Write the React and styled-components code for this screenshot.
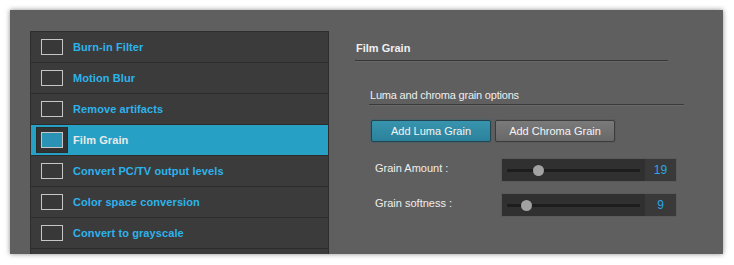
import React from "react";
import styled, { createGlobalStyle } from "styled-components";

const Global = createGlobalStyle`
  html, body { margin: 0; padding: 0; background: #ffffff; }
  body { font-family: "Liberation Sans", Arial, sans-serif; }
`;

const Window = styled.div`
  margin: 10px;
  width: 713px;
  height: 244px;
  box-sizing: border-box;
  background: #5f5f5f;
  box-shadow: 0 0 5px rgba(0, 0, 0, 0.45);
  display: flex;
  padding: 21px 0 0 20px;
  overflow: hidden;
`;

const List = styled.div`
  width: 299px;
  flex: none;
  box-sizing: border-box;
  background: #3b3b3b;
  border: 1px solid #2e2e2e;
  border-bottom: none;
  display: flex;
  flex-direction: column;
`;

const Row = styled.div`
  height: 30px;
  flex: none;
  border-bottom: 1px solid #2c2c2c;
  display: flex;
  align-items: center;
  padding-left: 10px;
  background: ${(p) => (p.$selected ? "#27a0c6" : "transparent")};
`;

const Check = styled.div`
  width: 20px;
  height: 14px;
  border: 1px solid #c6c6c6;
  background: ${(p) => (p.$selected ? "#2a93b5" : "#383838")};
  box-shadow: ${(p) => (p.$selected ? "0 0 0 4px #323232, 0 0 0 5px #2c2c2c" : "none")};
  flex: none;
`;

const RowLabel = styled.span`
  margin-left: 10px;
  font-size: 11px;
  font-weight: bold;
  color: ${(p) => (p.$selected ? "#eaeaea" : "#2db3ec")};
  letter-spacing: 0.1px;
`;

const Right = styled.div`
  margin-left: 26px;
  padding-top: 10px;
  display: flex;
  flex-direction: column;
`;

const Heading = styled.div`
  width: 312px;
  padding-left: 1px;
  font-size: 11px;
  font-weight: bold;
  color: #f0f0f0;
  line-height: 14px;
  padding-bottom: 5px;
  border-bottom: 1px solid #363636;
  box-shadow: 0 1px 0 #686868;
`;

const SubHeading = styled.div`
  margin: 27px 0 0 14px;
  width: 314px;
  padding-left: 1px;
  font-size: 11px;
  letter-spacing: -0.2px;
  color: #eeeeee;
  line-height: 14px;
  padding-bottom: 2px;
  border-bottom: 1px solid #3a3a3a;
  box-shadow: 0 1px 0 #686868;
`;

const Buttons = styled.div`
  margin: 15px 0 0 16px;
  display: flex;
  gap: 4px;
`;

const Button = styled.button`
  width: 120px;
  height: 22px;
  box-sizing: border-box;
  border-radius: 2px;
  border: 1px solid ${(p) => (p.$primary ? "#23434e" : "#3c3c3c")};
  background: ${(p) =>
    p.$primary
      ? "linear-gradient(#3894ae, #2b819b)"
      : "linear-gradient(#7a7a7a, #686868)"};
  color: #f4f4f4;
  font-family: "Liberation Sans", Arial, sans-serif;
  font-size: 11px;
  padding: 0;
  box-shadow: 0 0 0 1px ${(p) => (p.$primary ? "#4f5f64" : "#5a5a5a")};
`;

const Params = styled.div`
  margin: 17px 0 0 20px;
  display: flex;
  flex-direction: column;
  gap: 13px;
`;

const Param = styled.div`
  display: flex;
  align-items: center;
`;

const ParamLabel = styled.span`
  width: 127px;
  font-size: 11px;
  color: #eeeeee;
  padding-bottom: 4px;
`;

const SliderBox = styled.div`
  width: 174px;
  height: 22px;
  display: flex;
  background: #303030;
  box-shadow: 0 0 0 1px #5a5a5a;
`;

const TrackArea = styled.div`
  flex: 1;
  padding: 0 5px;
  display: flex;
  align-items: center;
`;

const Track = styled.div`
  position: relative;
  flex: 1;
  height: 3px;
  background: #1d1d1d;
  border-radius: 1px;
`;

const Thumb = styled.div`
  position: absolute;
  top: -4px;
  width: 11px;
  height: 11px;
  margin-left: -5px;
  border-radius: 50%;
  background: #a2a2a2;
`;

const Value = styled.div`
  width: 31px;
  background: #393939;
  color: #2aa6e6;
  font-size: 12px;
  display: flex;
  align-items: center;
  justify-content: center;
`;

const items = [
  "Burn-in Filter",
  "Motion Blur",
  "Remove artifacts",
  "Film Grain",
  "Convert PC/TV output levels",
  "Color space conversion",
  "Convert to grayscale",
  "",
];

const params = [
  { label: "Grain Amount :", value: 19, pos: 31 },
  { label: "Grain softness :", value: 9, pos: 19 },
];

export default function App() {
  return (
    <>
      <Global />
      <Window>
        <List>
          {items.map((t, i) => {
            const sel = t === "Film Grain";
            return (
              <Row key={i} $selected={sel}>
                {t && <Check $selected={sel} />}
                {t && <RowLabel $selected={sel}>{t}</RowLabel>}
              </Row>
            );
          })}
        </List>
        <Right>
          <Heading>Film Grain</Heading>
          <SubHeading>Luma and chroma grain options</SubHeading>
          <Buttons>
            <Button $primary>Add Luma Grain</Button>
            <Button>Add Chroma Grain</Button>
          </Buttons>
          <Params>
            {params.map((p) => (
              <Param key={p.label}>
                <ParamLabel>{p.label}</ParamLabel>
                <SliderBox>
                  <TrackArea>
                    <Track>
                      <Thumb style={{ left: p.pos }} />
                    </Track>
                  </TrackArea>
                  <Value>{p.value}</Value>
                </SliderBox>
              </Param>
            ))}
          </Params>
        </Right>
      </Window>
    </>
  );
}
